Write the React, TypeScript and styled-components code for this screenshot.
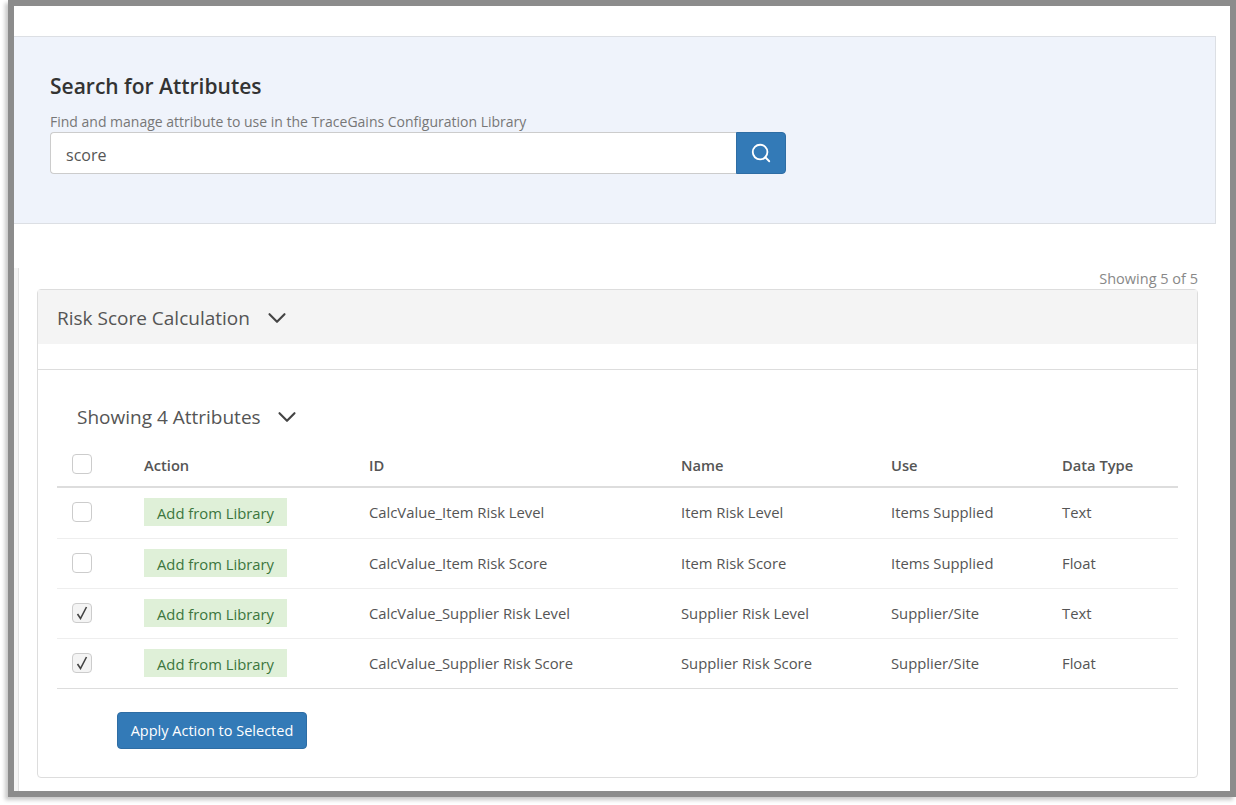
import styled, { createGlobalStyle } from "styled-components"
import { Search, ChevronDown } from "lucide-react"

const GlobalStyle = createGlobalStyle`
	html, body {
		margin: 0;
		padding: 0;
		height: 100%;
		overflow: hidden;
		background: #fff;
	}
	body {
		font-family: "Open Sans", "Noto Sans", sans-serif;
		font-size: 14px;
		color: #555;
	}
`

const Frame = styled.div`
	box-sizing: border-box;
	display: flex;
	flex-direction: column;
	margin-left: 8px;
	width: 1228px;
	height: 797px;
	border: 6px solid #8c8c8c;
	background: #fff;
	box-shadow: -3px 3px 4px rgba(0, 0, 0, 0.22);
`

const SearchPanel = styled.section`
	box-sizing: border-box;
	margin: 30px 14px 0 0;
	height: 188px;
	padding: 36px 36px 0;
	background: #eff3fb;
	border: 1px solid #dcdfe4;
	border-left: none;
`

const Title = styled.h2`
	margin: 0;
	font-size: 21px;
	line-height: 26px;
	font-weight: 600;
	color: #333;
`

const Hint = styled.p`
	margin: 13px 0 0;
	font-size: 14px;
	line-height: 19px;
	color: #777;
`

const SearchRow = styled.div`
	display: flex;
	width: 736px;
	height: 42px;
	margin-top: 1px;
`

const SearchInput = styled.div`
	box-sizing: border-box;
	flex: 1;
	padding-left: 15px;
	background: #fff;
	border: 1px solid #ccc;
	border-right: none;
	border-radius: 4px 0 0 4px;
	font-size: 16px;
	line-height: 44px;
	color: #555;
`

const SearchButton = styled.button`
	display: flex;
	align-items: center;
	justify-content: center;
	width: 50px;
	padding: 0;
	background: #337ab7;
	border: 1px solid #2e6da4;
	border-radius: 0 4px 4px 0;
	color: #fff;
`

const Lower = styled.div`
	flex: 1;
	margin-top: 44px;
	padding-left: 4px;
	background: #f5f5f5;
	display: flex;
`

const Content = styled.div`
	flex: 1;
	background: #fff;
	border-left: 1px solid #e2e2e2;
	padding: 0 32px 0 18px;
`

const Count = styled.div`
	height: 21px;
	text-align: right;
	font-size: 14.5px;
	line-height: 21px;
	color: #888;
`

const Card = styled.section`
	box-sizing: border-box;
	height: 489px;
	background: #fff;
	border: 1px solid #ddd;
	border-radius: 4px;
`

const CardHeader = styled.header`
	box-sizing: border-box;
	display: flex;
	align-items: center;
	gap: 12px;
	height: 54px;
	padding: 2px 0 0 19px;
	background: #f4f4f4;
	font-size: 19px;
	color: #555;
`

const Divider = styled.hr`
	margin: 25px 0 0;
	border: none;
	border-top: 1px solid #ddd;
`

const GroupToggle = styled.div`
	box-sizing: border-box;
	display: flex;
	align-items: center;
	gap: 11px;
	height: 74px;
	padding: 19px 0 0 39px;
	font-size: 19px;
	color: #555;
`

const Table = styled.table`
	width: 1121px;
	margin-left: 19px;
	border-collapse: collapse;
	table-layout: fixed;
`

const CheckBox = styled.span<{ $checked?: boolean }>`
	box-sizing: border-box;
	display: flex;
	align-items: center;
	justify-content: center;
	width: 20px;
	height: 20px;
	margin-left: 15px;
	background: ${(p) => (p.$checked ? "#f4f4f4" : "#fff")};
	border: 1px solid #ccc;
	border-radius: 4px;
	color: #444;
`

const HeadCell = styled.th`
	height: 42px;
	padding: 0;
	text-align: left;
	font-size: 14.7px;
	font-weight: 600;
	color: #555;
	border-bottom: 2px solid #ddd;
	${CheckBox} {
		margin-bottom: 2px;
	}
`

const Row = styled.tr`
	border-bottom: 1px solid #eee;
	&:first-child td {
		height: 48px;
	}
	&:last-child {
		border-bottom: 1px solid #ddd;
	}
`

const Cell = styled.td`
	height: 47px;
	padding: 0 0 2px;
	font-size: 14.8px;
	color: #555;
`

const ActionTag = styled.span`
	display: inline-block;
	padding: 2px 13px 0;
	background: #dff0d8;
	color: #3c763d;
	font-size: 14.8px;
	line-height: 26px;
	vertical-align: middle;
`

const ApplyButton = styled.button`
	display: block;
	width: 190px;
	height: 37px;
	margin: 23px 0 0 79px;
	padding: 0;
	background: #337ab7;
	border: 1px solid #2e6da4;
	border-radius: 4px;
	color: #fff;
	font-family: inherit;
	font-size: 14.5px;
`

const Tick = () => (
	<svg width='12' height='14' viewBox='0 0 12 14' fill='none' stroke='currentColor' strokeWidth='1.6'>
		<path d='M1.5 8 L4.5 12.5 L10.5 1' />
	</svg>
)

const rows = [
	{ id: "CalcValue_Item Risk Level", name: "Item Risk Level", use: "Items Supplied", type: "Text", checked: false },
	{ id: "CalcValue_Item Risk Score", name: "Item Risk Score", use: "Items Supplied", type: "Float", checked: false },
	{ id: "CalcValue_Supplier Risk Level", name: "Supplier Risk Level", use: "Supplier/Site", type: "Text", checked: true },
	{ id: "CalcValue_Supplier Risk Score", name: "Supplier Risk Score", use: "Supplier/Site", type: "Float", checked: true },
]

const App = () => {
	return (
		<Frame>
			<GlobalStyle />
			<SearchPanel>
				<Title>Search for Attributes</Title>
				<Hint>Find and manage attribute to use in the TraceGains Configuration Library</Hint>
				<SearchRow>
					<SearchInput>score</SearchInput>
					<SearchButton aria-label='Search'>
						<Search size={22} strokeWidth={2} />
					</SearchButton>
				</SearchRow>
			</SearchPanel>
			<Lower>
				<Content>
					<Count>Showing 5 of 5</Count>
					<Card>
						<CardHeader>
							Risk Score Calculation
							<ChevronDown size={30} strokeWidth={1.7} color='#444' />
						</CardHeader>
						<Divider />
						<GroupToggle>
							Showing 4 Attributes
							<ChevronDown size={30} strokeWidth={1.7} color='#444' />
						</GroupToggle>
						<Table>
							<colgroup>
								<col width={87} />
								<col width={225} />
								<col width={312} />
								<col width={210} />
								<col width={171} />
								<col width={116} />
							</colgroup>
							<thead>
								<tr>
									<HeadCell>
										<CheckBox />
									</HeadCell>
									<HeadCell>Action</HeadCell>
									<HeadCell>ID</HeadCell>
									<HeadCell>Name</HeadCell>
									<HeadCell>Use</HeadCell>
									<HeadCell>Data Type</HeadCell>
								</tr>
							</thead>
							<tbody>
								{rows.map((r) => (
									<Row key={r.id}>
										<Cell>
											<CheckBox $checked={r.checked}>{r.checked && <Tick />}</CheckBox>
										</Cell>
										<Cell>
											<ActionTag>Add from Library</ActionTag>
										</Cell>
										<Cell>{r.id}</Cell>
										<Cell>{r.name}</Cell>
										<Cell>{r.use}</Cell>
										<Cell>{r.type}</Cell>
									</Row>
								))}
							</tbody>
						</Table>
						<ApplyButton>Apply Action to Selected</ApplyButton>
					</Card>
				</Content>
			</Lower>
		</Frame>
	)
}

export default App
